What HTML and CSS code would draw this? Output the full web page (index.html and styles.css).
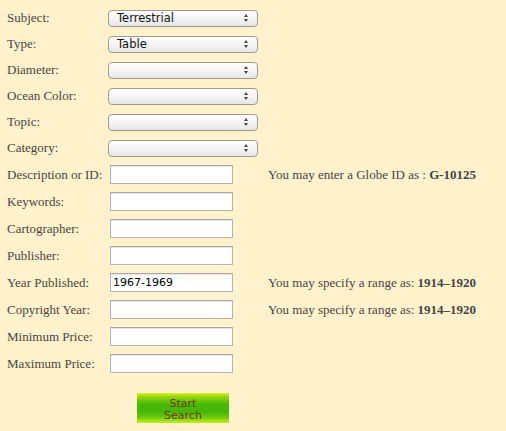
FILE: index.html
```html
<!DOCTYPE html>
<html>
<head>
<meta charset="utf-8">
<link rel="stylesheet" href="styles.css">
</head>
<body>
<form class="search">
  <div class="grid">
    <label class="lbl">Subject:</label>
    <div class="sel"><select><option>Terrestrial</option></select></div>
    <div class="hint"></div>

    <label class="lbl">Type:</label>
    <div class="sel"><select><option>Table</option></select></div>
    <div class="hint"></div>

    <label class="lbl">Diameter:</label>
    <div class="sel"><select><option></option></select></div>
    <div class="hint"></div>

    <label class="lbl">Ocean Color:</label>
    <div class="sel"><select><option></option></select></div>
    <div class="hint"></div>

    <label class="lbl">Topic:</label>
    <div class="sel"><select><option></option></select></div>
    <div class="hint"></div>

    <label class="lbl">Category:</label>
    <div class="sel"><select><option></option></select></div>
    <div class="hint"></div>

    <label class="lbl">Description or ID:</label>
    <div class="fld"><input type="text"></div>
    <div class="hint">You may enter a Globe ID as : <b>G-10125</b></div>

    <label class="lbl">Keywords:</label>
    <div class="fld"><input type="text"></div>
    <div class="hint"></div>

    <label class="lbl">Cartographer:</label>
    <div class="fld"><input type="text"></div>
    <div class="hint"></div>

    <label class="lbl">Publisher:</label>
    <div class="fld"><input type="text"></div>
    <div class="hint"></div>

    <label class="lbl">Year Published:</label>
    <div class="fld"><input type="text" value="1967-1969"></div>
    <div class="hint">You may specify a range as: <b>1914–1920</b></div>

    <label class="lbl">Copyright Year:</label>
    <div class="fld"><input type="text"></div>
    <div class="hint">You may specify a range as: <b>1914–1920</b></div>

    <label class="lbl">Minimum Price:</label>
    <div class="fld"><input type="text"></div>
    <div class="hint"></div>

    <label class="lbl">Maximum Price:</label>
    <div class="fld"><input type="text"></div>
    <div class="hint"></div>
  </div>
  <div class="actions">
    <button type="button" class="go">Start<br>Search</button>
  </div>
</form>
</body>
</html>
```

FILE: styles.css
```css
html, body {
  margin: 0;
  padding: 0;
  background: #fff2cc;
}
body {
  font-family: "Liberation Serif", "DejaVu Serif", serif;
  font-size: 13px;
  color: #4a4540;
}
.search {
  padding: 5px 0 0 7px;
}
.grid {
  display: grid;
  grid-template-columns: 101px 153px auto;
  grid-template-rows: repeat(6, 26px) repeat(8, 27px);
  align-items: center;
}
.lbl {
  white-space: nowrap;
}
.sel {
  position: relative;
  width: 150px;
  height: 17px;
}
.sel select {
  -webkit-appearance: none;
  appearance: none;
  width: 150px;
  height: 17px;
  margin: 0;
  padding: 0 0 0 8px;
  border: 1px solid #a39a8c;
  border-radius: 4px;
  background: linear-gradient(#ffffff, #f4f4f4 50%, #e6e6e6);
  font-family: "DejaVu Sans", sans-serif;
  font-size: 11.5px;
  color: #111;
  box-sizing: border-box;
  line-height: 15px;
}
.sel::before,
.sel::after {
  content: "";
  position: absolute;
  right: 10px;
  width: 0;
  height: 0;
  border-left: 2.5px solid transparent;
  border-right: 2.5px solid transparent;
}
.sel::before {
  top: 4px;
  border-bottom: 3px solid #444;
}
.sel::after {
  top: 9px;
  border-top: 3px solid #444;
}
.fld {
  padding-left: 2px;
}
.fld input {
  display: block;
  width: 123px;
  height: 19px;
  margin: 0;
  padding: 0 2px;
  border: 1px solid #b3b3b3;
  border-top-color: #a8a8a8;
  box-shadow: inset 0 1px 0 #e4e4e4;
  background: #fff;
  box-sizing: border-box;
  font-family: "DejaVu Sans", sans-serif;
  font-size: 11px;
  color: #000;
}
.hint {
  padding-left: 7px;
  white-space: nowrap;
}
.hint b {
  color: #444;
}
.actions {
  padding: 16px 0 0 130px;
}
.go {
  display: block;
  width: 92px;
  height: 30px;
  margin: 0;
  padding: 3px 0 0;
  border: 0;
  box-sizing: border-box;
  background: linear-gradient(#d8f41a 0%, #9ad610 12%, #4cbb08 35%, #42b506 60%, #69c80a 80%, #c7ee18 100%);
  font-family: "DejaVu Sans", sans-serif;
  font-size: 11px;
  line-height: 11.5px;
  color: #7a3514;
}
```
